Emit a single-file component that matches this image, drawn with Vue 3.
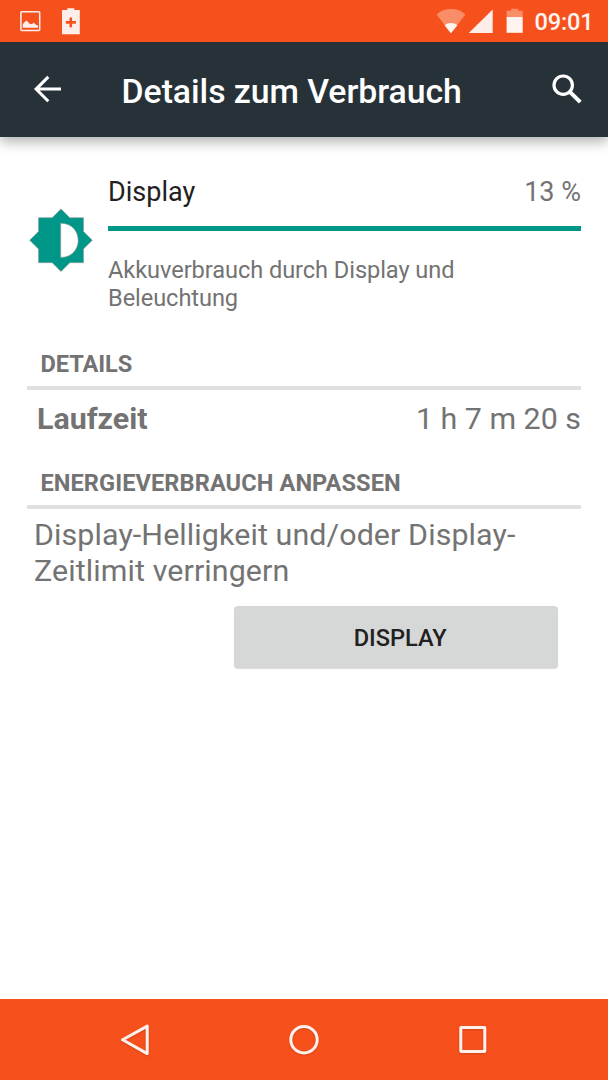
<script setup>
const usage = { name: 'Display', percent: '13 %', level: 100 }
</script>

<template>
  <div class="screen">
    <div class="status">
      <svg class="status-left" width="100" height="42" viewBox="0 0 100 42">
        <rect x="20.9" y="11.8" width="18.8" height="18.6" rx=".8" fill="none" stroke="#fdeee9" stroke-width="1.5" />
        <path d="M22.7 27.8V24.2L24.5 22.3 26.6 20.5 29.6 23.7 31.5 24.2 33.8 22.8 36 24.7 37.9 25.6V27.8Z" fill="#fdeee9" />
        <path d="M62 10H67.3V8.2H74.3V10H79.8V34.3H62ZM69.5 17.5V21.1H65.8V23.8H69.5V27.3H72.1V23.8H75.9V21.1H72.1V17.5Z" fill="#fdeee9" fill-rule="evenodd" />
      </svg>
      <svg class="status-right" width="96" height="42" viewBox="0 0 96 42">
        <path d="M18.9 33.2 4.6 14.4C12.5 7.2 25.5 7.2 33.4 14.4Z" fill="#f98d68" />
        <path d="M18.9 33.2 12.6 25.2C16 22.2 22 22.2 25.4 25.2Z" fill="#fff4f0" />
        <path d="M36.8 33 60.7 9.4V33Z" fill="#fdeee9" />
        <path d="M74.6 17V10.7H79.2V8.8H86.3V10.7H90.7V17Z" fill="#f98d68" />
        <rect x="74.6" y="17" width="16.1" height="15.8" fill="#fff4f0" />
      </svg>
      <span class="clock">09:01</span>
    </div>

    <header class="bar">
      <svg class="back" width="34" height="34" viewBox="0 0 34 34">
        <path d="M31 17.1H6.6M18.3 4.9 6.1 17.1 18.3 29.3" fill="none" stroke="#fff" stroke-width="3" />
      </svg>
      <h1>Details zum Verbrauch</h1>
      <svg class="search" width="34" height="34" viewBox="0 0 34 34">
        <circle cx="13.2" cy="13.2" r="9.2" fill="none" stroke="#fff" stroke-width="3.2" />
        <path d="M18.8 18.8 30.3 30.2" fill="none" stroke="#fff" stroke-width="4" />
      </svg>
    </header>

    <main>
      <section class="summary">
        <svg class="icon" width="64" height="64" viewBox="0 0 64 64">
          <path d="M32 .9 40.8 9.7H54.5V23.4L63.3 32.2 54.5 41V54.7H40.8L32 63.5 23.2 54.7H9.5V41L.7 32.2 9.5 23.4V9.7H23.2ZM31.7 15.2V49.4C55 49.4 55 15.2 31.7 15.2Z" fill="#009688" fill-rule="evenodd" stroke="#8d9b98" stroke-width=".6" />
        </svg>
        <div class="info">
          <div class="row"><span class="name">{{ usage.name }}</span><span>{{ usage.percent }}</span></div>
          <div class="track"><div class="fill" :style="{ width: usage.level + '%' }"></div></div>
          <p>Akkuverbrauch durch Display und<br>Beleuchtung</p>
        </div>
      </section>

      <h2 class="first">DETAILS</h2>
      <div class="runtime"><b>Laufzeit</b><span>1 h 7 m 20 s</span></div>

      <h2>ENERGIEVERBRAUCH ANPASSEN</h2>
      <p class="hint">Display-Helligkeit und/oder Display-<br>Zeitlimit verringern</p>
      <button type="button">DISPLAY</button>
    </main>

    <nav>
      <svg width="34" height="36" viewBox="0 0 34 36">
        <path d="M29.2 4.1V31.6L4.6 17.8Z" fill="none" stroke="#fff1ec" stroke-width="3" stroke-linejoin="round" />
      </svg>
      <svg width="34" height="36" viewBox="0 0 34 36">
        <circle cx="17" cy="17.7" r="13.2" fill="none" stroke="#fff1ec" stroke-width="3" />
      </svg>
      <svg width="34" height="36" viewBox="0 0 34 36">
        <rect x="4.8" y="5.6" width="24" height="24" rx=".5" fill="none" stroke="#fff1ec" stroke-width="3" />
      </svg>
    </nav>
  </div>
</template>

<style>
body { margin: 0; background: #fff; }
</style>

<style scoped>
.screen {
  display: flex;
  flex-direction: column;
  width: 608px;
  height: 1080px;
  overflow: hidden;
  background: #fff;
  color: #737373;
  font-family: Roboto, "Liberation Sans", sans-serif;
}
svg { display: block; flex: none; }
.status {
  position: relative;
  z-index: 1;
  display: flex;
  height: 42px;
  background: #f6511d;
  box-sizing: border-box;
  padding-right: 14.5px;
}
.status-right { margin-left: auto; }
.clock {
  margin-left: 5.5px;
  width: 60px;
  text-align: right;
  white-space: nowrap;
  color: #fff4f0;
  font-size: 23.6px;
  font-weight: 500;
  letter-spacing: -.15px;
  line-height: 45px;
}
.bar {
  display: flex;
  align-items: center;
  height: 95px;
  padding: 0 24px 0 30px;
  box-sizing: border-box;
  background: #263238;
  color: #fff;
  box-shadow: 0 5px 12px rgba(0, 0, 0, .3);
}
.bar svg { margin-bottom: 1px; }
h1 {
  margin: 4px 0 0 57.6px;
  font-size: 33.8px;
  font-weight: 500;
  line-height: 40px;
  letter-spacing: -.05px;
  white-space: nowrap;
}
.search { margin-left: auto; }
main { flex: 1; padding: 39px 27px 0; }
p, h2 { margin: 0; }
.summary { display: flex; }
.icon { margin: 32px 15px 0 2px; }
.info { flex: 1; }
.row {
  display: flex;
  justify-content: space-between;
  font-size: 27px;
  line-height: 32px;
}
.name { color: #212121; }
.track { height: 5px; margin: 18px 0 25px; background: #e0e0e0; }
.fill { height: 100%; background: #009688; }
.info p { font-size: 23.6px; line-height: 28px; letter-spacing: -.07px; }
h2 {
  margin-top: 32px;
  padding: 0 0 8px 13.4px;
  border-bottom: 4px solid #e0e0e0;
  font-size: 23.6px;
  line-height: 28px;
  font-weight: 700;
  letter-spacing: .08px;
}
h2.first { margin-top: 38px; letter-spacing: -.05px; }
.runtime {
  display: flex;
  justify-content: space-between;
  padding: 11px 0 0 10px;
  font-size: 30.4px;
  line-height: 36px;
}
.hint {
  padding: 7.5px 0 0 7px;
  font-size: 30.4px;
  line-height: 36px;
  letter-spacing: .1px;
}
button {
  display: block;
  width: 324px;
  height: 62px;
  margin: 17px 0 0 206.7px;
  padding: 2px 0 0 9px;
  border: 0;
  border-radius: 4px;
  background: #d6d8d7;
  box-shadow: 0 1px 1px rgba(0, 0, 0, .15);
  color: #212121;
  font: 500 23.6px/28px Roboto, sans-serif;
}
nav {
  display: flex;
  gap: 135px;
  height: 81px;
  box-sizing: border-box;
  padding: 23px 0 0 118px;
  background: #f6511d;
}
nav svg { filter: drop-shadow(0 1px 1px rgba(0, 0, 0, .15)); }
</style>
